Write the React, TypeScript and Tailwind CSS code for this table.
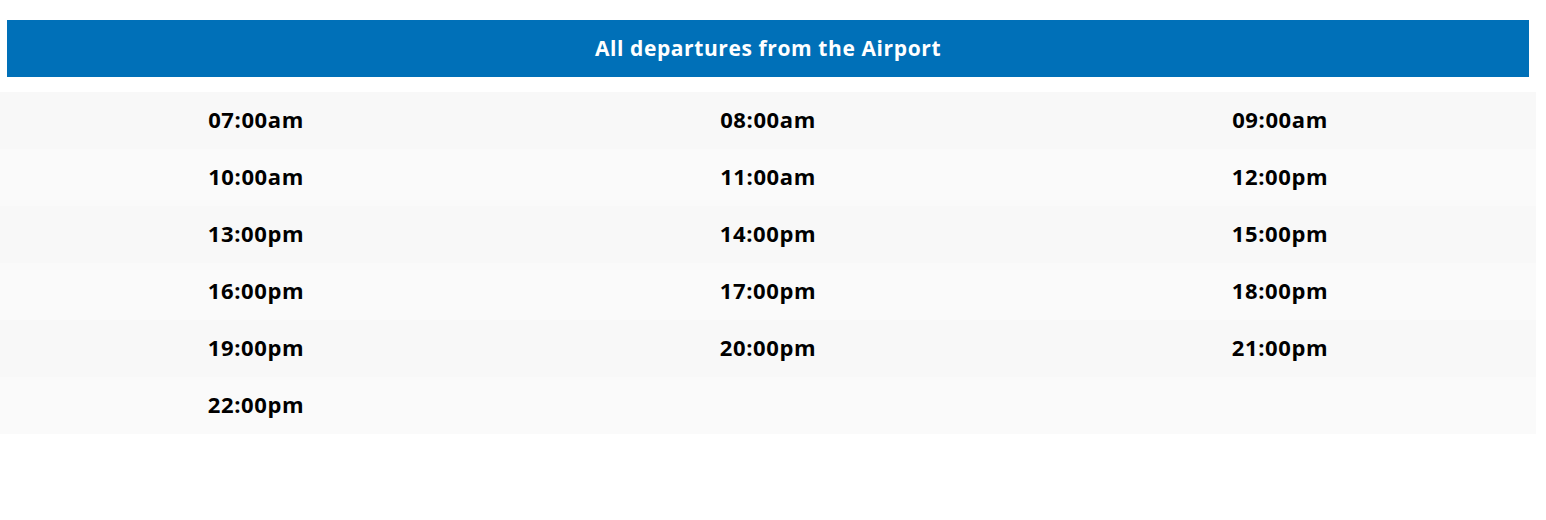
const times = [
  '07:00am', '08:00am', '09:00am',
  '10:00am', '11:00am', '12:00pm',
  '13:00pm', '14:00pm', '15:00pm',
  '16:00pm', '17:00pm', '18:00pm',
  '19:00pm', '20:00pm', '21:00pm',
  '22:00pm',
];

const rows: string[][] = [];
for (let i = 0; i < times.length; i += 3) rows.push(times.slice(i, i + 3));

export default function App() {
  return (
    <div className="min-h-screen bg-white pt-5 font-['Open_Sans',sans-serif]">
      <div className="w-[1536px]">
        <div className="mx-[7px] h-[57px] bg-[#0070b8] flex items-center justify-center">
          <h2 className="text-white text-[21px] font-bold tracking-[0.6px]">All departures from the Airport</h2>
        </div>

        <div className="mt-[15px]">
          {rows.map((row, i) => (
            <div
              key={i}
              className={`grid grid-cols-3 h-[57px] items-center ${i % 2 === 0 ? 'bg-[#f8f8f8]' : 'bg-[#fafafa]'}`}
            >
              {row.map((t) => (
                <div key={t} className="text-center text-[22px] font-bold tracking-[0.6px] text-black pb-[2px]">
                  {t}
                </div>
              ))}
            </div>
          ))}
        </div>
      </div>
    </div>
  );
}
